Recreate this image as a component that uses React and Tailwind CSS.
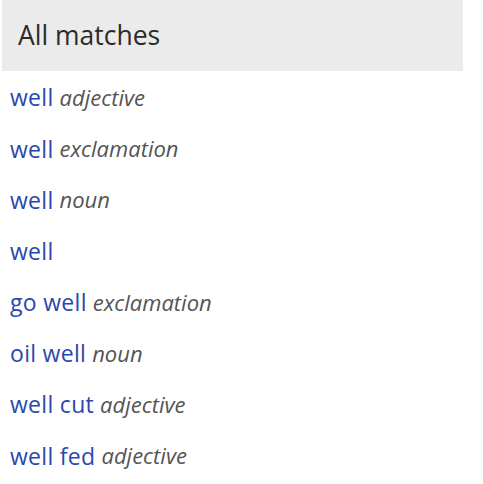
const matches = [
  { word: "well", pos: "adjective" },
  { word: "well", pos: "exclamation" },
  { word: "well", pos: "noun" },
  { word: "well", pos: "" },
  { word: "go well", pos: "exclamation" },
  { word: "oil well", pos: "noun" },
  { word: "well cut", pos: "adjective" },
  { word: "well fed", pos: "adjective" },
];

export default function App() {
  return (
    <div className="w-[483px] h-[484px] bg-white font-['Open_Sans',sans-serif]">
      <div className="ml-[2px] w-[461px] h-[71px] bg-[#ebebeb] flex items-center px-4">
        <h2 className="text-[26.5px] text-[#2b2b2b]">All matches</h2>
      </div>
      <ul className="pl-[10px] pt-[1px]">
        {matches.map((m, i) => (
          <li key={i} className="h-[51.2px] flex items-center">
            <a href="#" className="text-[23px] tracking-[0.3px] text-[#2a47ad]">{m.word}</a>
            {m.pos && (
              <span className="ml-[6px] text-[22px] italic text-[#555]">{m.pos}</span>
            )}
          </li>
        ))}
      </ul>
    </div>
  );
}
